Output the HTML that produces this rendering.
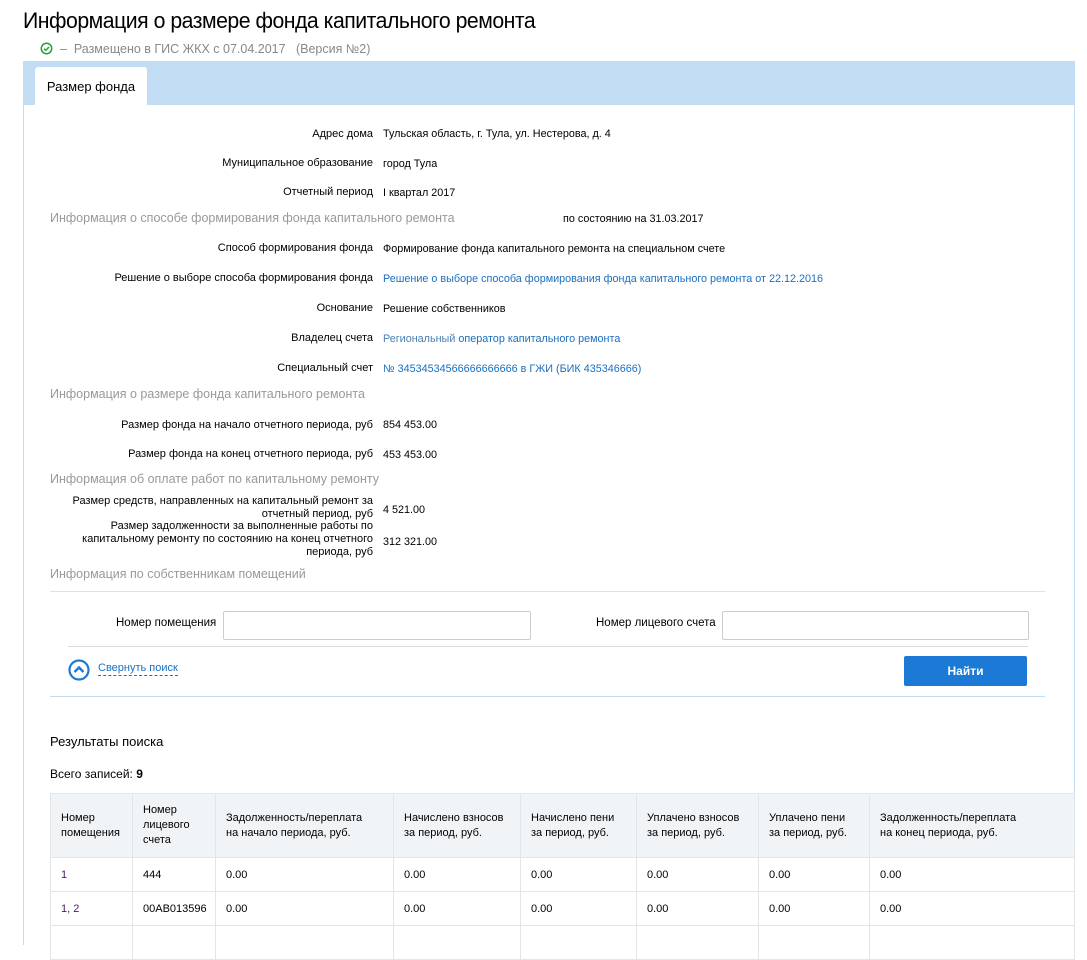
<!DOCTYPE html>
<html><head><meta charset="utf-8"><style>
body{margin:0;width:1087px;height:935px;overflow:hidden;background:#fff;font-family:"Liberation Sans",sans-serif;color:#000;font-size:11px;position:relative}
.a{position:absolute;white-space:nowrap}
h1{position:absolute;left:23px;top:8px;margin:0;font-weight:normal;font-size:22px;letter-spacing:-0.5px;transform:scaleX(0.965);transform-origin:left}
.band{position:absolute;left:23px;top:61px;width:1052px;height:44px;background:#c2ddf3}
.tab{position:absolute;left:35px;top:67px;width:112px;height:38px;background:#fff;border-radius:3px 3px 0 0;font-size:13px;line-height:40px;text-align:center}
.panel{position:absolute;left:23px;top:105px;width:1050px;height:840px;border-left:1px solid #c2ddf3;border-right:1px solid #c2ddf3}
.l{position:absolute;right:714px;text-align:right;white-space:nowrap;font-size:11px}
.v{position:absolute;left:383px;white-space:nowrap;font-size:10.8px}
.lk{color:#1c6fbf}
.s{position:absolute;left:50px;color:#999;font-size:12.5px;white-space:nowrap}
.in{position:absolute;height:27px;border:1px solid #ccc;border-radius:2px;background:#fff}
table{position:absolute;left:50px;top:793px;border-collapse:collapse;width:1025px;font-size:11px;table-layout:fixed}
td,th{border:1px solid #e1e6eb;text-align:left;padding:0 10px;vertical-align:middle}
th{background:#f1f4f7;font-weight:normal;height:63px;line-height:15px;font-size:11px}
td{height:33px}
</style></head><body>
<h1>Информация о размере фонда капитального ремонта</h1>
<div class="a" style="left:40px;top:42px;color:#888;font-size:12.5px"><svg width="13" height="13" viewBox="0 0 14 14" style="vertical-align:-2px"><circle cx="7" cy="7" r="5.6" fill="none" stroke="#2a9d3c" stroke-width="1.6"/><path d="M4.3 7.2l1.9 1.8 3.5-3.6" fill="none" stroke="#2a9d3c" stroke-width="1.6"/></svg> &nbsp;– &nbsp;Размещено в ГИС ЖКХ с 07.04.2017 &nbsp;&nbsp;(Версия №2)</div>
<div class="band"></div>
<div class="tab">Размер фонда</div>
<div class="panel"></div>

<div class="l" style="top:128px">Адрес дома</div><div class="v" style="top:128px">Тульская область, г. Тула, ул. Нестерова, д. 4</div>
<div class="l" style="top:157px">Муниципальное образование</div><div class="v" style="top:158px">город Тула</div>
<div class="l" style="top:186px">Отчетный период</div><div class="v" style="top:187px">I квартал 2017</div>
<div class="s" style="top:211px">Информация о способе формирования фонда капитального ремонта</div>
<div class="a" style="left:563px;top:213px;font-size:10.8px">по состоянию на 31.03.2017</div>
<div class="l" style="top:242px">Способ формирования фонда</div><div class="v" style="top:243px">Формирование фонда капитального ремонта на специальном счете</div>
<div class="l" style="top:272px">Решение о выборе способа формирования фонда</div><div class="v lk" style="top:273px">Решение о выборе способа формирования фонда капитального ремонта от 22.12.2016</div>
<div class="l" style="top:302px">Основание</div><div class="v" style="top:303px">Решение собственников</div>
<div class="l" style="top:332px">Владелец счета</div><div class="v lk" style="top:333px"><span style="color:#4a7fb5">Региональный</span> оператор капитального ремонта</div>
<div class="l" style="top:362px">Специальный счет</div><div class="v lk" style="top:363px">№ 34534534566666666666 в ГЖИ (БИК 435346666)</div>
<div class="s" style="top:387px">Информация о размере фонда капитального ремонта</div>
<div class="l" style="top:419px">Размер фонда на начало отчетного периода, руб</div><div class="v" style="top:419px">854 453.00</div>
<div class="l" style="top:448px">Размер фонда на конец отчетного периода, руб</div><div class="v" style="top:449px">453 453.00</div>
<div class="s" style="top:472px">Информация об оплате работ по капитальному ремонту</div>
<div class="l" style="top:495px;line-height:13px">Размер средств, направленных на капитальный ремонт за<br>отчетный период, руб</div><div class="v" style="top:504px">4 521.00</div>
<div class="l" style="top:520px;line-height:13px">Размер задолженности за выполненные работы по<br>капитальному ремонту по состоянию на конец отчетного<br>периода, руб</div><div class="v" style="top:536px">312 321.00</div>
<div class="s" style="top:567px">Информация по собственникам помещений</div>
<div class="a" style="left:50px;top:591px;width:995px;height:1px;background:#d6e4f0"></div>
<div class="a" style="left:116px;top:617px;font-size:11.5px">Номер помещения</div>
<div class="in" style="left:223px;top:611px;width:306px"></div>
<div class="a" style="left:596px;top:617px;font-size:11.5px">Номер лицевого счета</div>
<div class="in" style="left:722px;top:611px;width:305px"></div>
<div class="a" style="left:68px;top:646px;width:960px;height:1px;background:#ddd"></div>
<svg class="a" style="left:68px;top:659px" width="22" height="22" viewBox="0 0 22 22"><circle cx="11" cy="11" r="9.5" fill="none" stroke="#1c7ad6" stroke-width="2.2"/><path d="M6.5 13l4.5-4.5 4.5 4.5" fill="none" stroke="#1c7ad6" stroke-width="2.4"/></svg>
<div class="a" style="left:98px;top:662px;color:#1c6fbf;font-size:11px;border-bottom:1px dashed #1c6fbf;padding-bottom:1px">Свернуть поиск</div>
<div class="a" style="left:904px;top:656px;width:123px;height:30px;background:#1c7ad6;border-radius:2px;color:#fff;font-weight:bold;font-size:12px;text-align:center;line-height:30px">Найти</div>
<div class="a" style="left:50px;top:696px;width:995px;height:1px;background:#c2ddf3"></div>
<div class="a" style="left:50px;top:734px;font-size:13px">Результаты поиска</div>
<div class="a" style="left:50px;top:767px;font-size:12px">Всего записей: <b>9</b></div>
<table>
<colgroup><col style="width:82px"><col style="width:83px"><col style="width:178px"><col style="width:127px"><col style="width:116px"><col style="width:122px"><col style="width:111px"><col></colgroup>
<tr><th>Номер<br>помещения</th><th>Номер<br>лицевого<br>счета</th><th>Задолженность/переплата<br>на начало периода, руб.</th><th>Начислено взносов<br>за период, руб.</th><th>Начислено пени<br>за период, руб.</th><th>Уплачено взносов<br>за период, руб.</th><th>Уплачено пени<br>за период, руб.</th><th>Задолженность/переплата<br>на конец периода, руб.</th></tr>
<tr><td style="color:#4b1a6b">1</td><td>444</td><td>0.00</td><td>0.00</td><td>0.00</td><td>0.00</td><td>0.00</td><td>0.00</td></tr>
<tr><td style="color:#4b1a6b">1, 2</td><td>00AB013596</td><td>0.00</td><td>0.00</td><td>0.00</td><td>0.00</td><td>0.00</td><td>0.00</td></tr>
<tr><td></td><td></td><td></td><td></td><td></td><td></td><td></td><td></td></tr>
</table>
</body></html>
